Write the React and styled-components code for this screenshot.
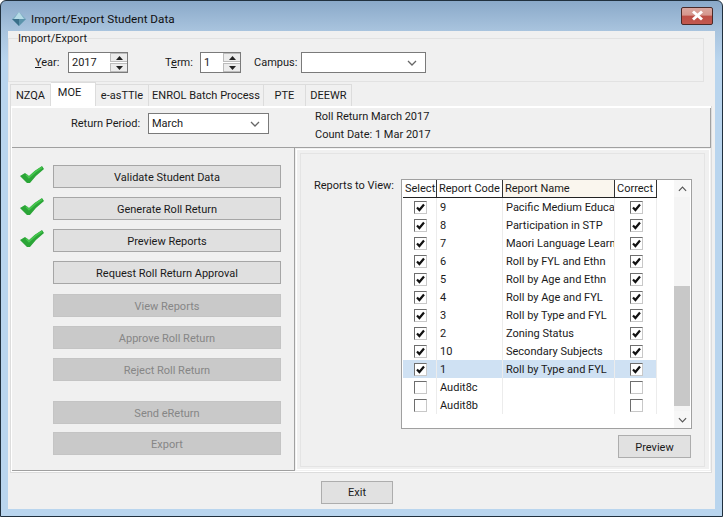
import React from "react";
import styled, { createGlobalStyle } from "styled-components";

const Global = createGlobalStyle`
  html, body { margin: 0; padding: 0; background: #fff; }
  * { box-sizing: border-box; }
  body { font-family: Roboto, "Liberation Sans", sans-serif; font-size: 11px; color: #1a1a1a; }
`;

const Frame = styled.div`
  width: 723px; height: 517px; display: flex; flex-direction: column;
  border: 1px solid #20303e; border-radius: 6px 6px 0 0; overflow: hidden;
  background: linear-gradient(180deg, #8aa9c9 0, #a9c4de 30px, #b9d5ee 60px, #b9d5ee 100%);
`;
const TitleBar = styled.div`
  height: 30px; flex: none; display: flex; align-items: center; padding: 5px 9px 0 11px; gap: 5px;
`;
const Title = styled.span` flex: 1; font-size: 11.7px; color: #101010; `;
const CloseBtn = styled.div`
  width: 32px; height: 18px; margin-top: -6px; display: flex; align-items: center; justify-content: center;
  border: 1px solid #4a2a28; border-radius: 2px;
  background: linear-gradient(180deg, #dba79f 0, #d5968d 45%, #bd4f46 50%, #c2584e 100%);
`;
const Client = styled.div`
  flex: 1; margin: 0 7px 7px 7px; background: #f0f0f0; display: flex; flex-direction: column; min-height: 0;
`;
const Group = styled.fieldset`
  margin: 0 11px 0 0; padding: 6px 0 8px 26px; height: 51px; flex: none;
  border: 1px solid #e2e2e2;
`;
const Legend = styled.legend`
  margin-left: -17px; padding: 1px 0 0; font-size: 11px; line-height: 14px;
`;
const FormRow = styled.div` display: flex; align-items: center; height: 21px; `;
const Label = styled.label`
  white-space: nowrap; margin-left: ${p => p.$ml || 0}px; width: ${p => p.$w}px; flex: none;
`;
const SpinBox = styled.div`
  width: ${p => p.$w}px; height: 21px; display: flex; flex: none; background: #fff;
  border: 1px solid #7a7a7a; padding: 0 0 0 3px; align-items: center; justify-content: space-between;
`;
const SpinBtns = styled.div` width: 17px; height: 19px; display: flex; flex-direction: column; gap: 1px; `;
const SpinBtn = styled.div`
  flex: 1; display: flex; align-items: center; justify-content: center;
  background: #ececec; border: 1px solid #bcbcbc; border-width: 1px 0 1px 1px;
`;
const Select = styled.div`
  width: ${p => p.$w}px; height: 21px; flex: none; display: flex; align-items: center; justify-content: space-between;
  background: #fff; border: 1px solid #7a7a7a; padding: 0 8px 0 3px;
`;
const TabStrip = styled.div` display: flex; height: 24px; flex: none; padding-left: 2px; align-items: flex-end; `;
const Tab = styled.div`
  width: ${p => p.$w}px; height: ${p => (p.$active ? 24 : 22)}px; flex: none; display: flex; align-items: center;
  justify-content: center; white-space: nowrap;
  background: ${p => (p.$active ? "#fff" : "#f0f0f0")};
  border: 1px solid #dcdcdc; border-bottom: none; border-left: ${p => (p.$first ? "1px solid #dcdcdc" : "none")};
  padding: 0 ${p => (p.$active ? 7 : 0)}px ${p => (p.$active ? 4 : 0)}px 0;
`;
const TabPanel = styled.div`
  height: 367px; margin: 0 3px 0 2px; flex: none; display: flex; flex-direction: column;
  border: 1px solid #dcdcdc; border-top: none; background: #fff; padding: 2px 0 1px 1px;
`;
const TopSection = styled.div`
  height: 40px; flex: none; background: #f0f0f0; display: flex; padding: 0 0 0 59px;
  border-right: 1px solid #a0a0a0; border-bottom: 1px solid #a0a0a0;
`;
const PeriodRow = styled.div` display: flex; align-items: center; height: 21px; margin-top: 5px; `;
const RollInfo = styled.div` display: flex; flex-direction: column; margin-left: 46px; line-height: 18px; `;
const Split = styled.div` flex: 1; display: flex; min-height: 0; background: #f0f0f0; `;
const LeftPanel = styled.div`
  width: 283px; flex: none; padding: 17px 0 0 8px; display: flex; flex-direction: column; gap: 9px;
  border-right: 1px solid #a0a0a0; border-bottom: 1px solid #a0a0a0; background: #f0f0f0;
`;
const ActionRow = styled.div` display: flex; align-items: flex-start; gap: 9px; padding-left: ${p => (p.$check ? 0 : 33)}px; margin-top: ${p => p.$mt || 0}px; `;
const ActionBtn = styled.div`
  width: 228px; height: 23px; flex: none; display: flex; align-items: center; justify-content: center; padding-top: 1px;
  background: ${p => (p.$disabled ? "#c9c9c9" : "#e0e0e0")};
  color: ${p => (p.$disabled ? "#868686" : "#1a1a1a")};
  border: 1px solid ${p => (p.$disabled ? "#c4c4c4" : "#a6a6a6")};
`;
const RightOuter = styled.div`
  flex: 1; margin: 1px 2px 1px 1px; padding: 3px 4px 2px 3px; background: #f0f0f0;
  border: 1px solid #fff; display: flex;
`;
const RightInner = styled.div`
  flex: 1; border: 1px solid #e4e4e4; padding: 25px 12px 0 13px; display: grid;
  grid-template-columns: 87px 1fr; grid-template-rows: 250px auto; row-gap: 6px; align-content: start;
`;
const ReportsLabel = styled.div` line-height: 14px; white-space: nowrap; `;
const ReportBox = styled.div`
  width: 291px; height: 250px; background: #fff; border: 1px solid #a0a0a0; display: flex; justify-content: space-between; padding: 0 1px;
`;
const Grid = styled.div` display: flex; flex-direction: column; width: 254px; `;
const Row = styled.div`
  display: grid; grid-template-columns: 34px 66px 112px 42px; height: 18px; flex: none;
  background: ${p => (p.$sel ? "#cfe1f3" : "transparent")};
  ${p => p.$head && "border-bottom: 1px solid #222;"}
`;
const HeadCell = styled.div`
  display: flex; align-items: center; padding: 0 0 1px 2px; white-space: nowrap; overflow: hidden;
  border-right: 1px solid #333; background: ${p => (p.$warm ? "#faf6ee" : "#fff")};
`;
const Cell = styled.div`
  display: flex; align-items: center; justify-content: ${p => (p.$center ? "center" : "flex-start")};
  padding-left: ${p => (p.$center ? 2 : 3)}px; white-space: nowrap; overflow: hidden; border-right: 1px solid #ececec;
`;
const Check = styled.div`
  width: 13px; height: 13px; border: 1px solid; border-color: #6e6e6e #c8c8c8 #c8c8c8 #6e6e6e; background: #fff;
  display: flex; align-items: center; justify-content: center;
`;
const ScrollBar = styled.div`
  width: 16px; display: flex; flex-direction: column; align-items: stretch; background: #f4f4f4;
`;
const ScrollEnd = styled.div` height: 17px; flex: none; display: flex; align-items: center; justify-content: center; background: #f7f7f7; `;
const ScrollTrack = styled.div` flex: 1; display: flex; flex-direction: column; padding: 89px 0 5px; `;
const Thumb = styled.div` flex: 1; background: #c8c8c8; `;
const PreviewBtn = styled.div`
  grid-column: 2; justify-self: end; width: 73px; height: 23px; margin-right: 1px; padding-top: 1px;
  display: flex; align-items: center; justify-content: center; background: #e1e1e1; border: 1px solid #adadad;
`;
const Footer = styled.div` flex: 1; padding: 8px 0 0 313px; `;
const ExitBtn = styled.div`
  width: 72px; height: 23px; display: flex; align-items: center; justify-content: center;
  background: #e1e1e1; border: 1px solid #adadad;
`;

const Chevron = ({ up, color = "#555", w = 10, h = 6 }) => (
  <svg width={w} height={h} viewBox="0 0 10 6">
    <polyline points={up ? "1,5 5,1 9,5" : "1,1 5,5 9,1"} fill="none" stroke={color} strokeWidth="1.3" />
  </svg>
);
const Tri = ({ up }) => (
  <svg width="7" height="4" viewBox="0 0 7 4"><polygon points={up ? "3.5,0 7,4 0,4" : "0,0 7,0 3.5,4"} fill="#222" /></svg>
);
const Spin = () => (
  <SpinBtns>
    <SpinBtn><Tri up /></SpinBtn>
    <SpinBtn><Tri /></SpinBtn>
  </SpinBtns>
);
const Tick = () => (
  <svg width="9" height="9" viewBox="0 0 9 9">
    <polyline points="1,4.5 3.4,7 8,1.5" fill="none" stroke="#111" strokeWidth="2.2" />
  </svg>
);
const GreenCheck = () => (
  <svg width="24" height="18" viewBox="0 0 24 18" style={{ flex: "none", marginTop: 1 }}>
    <path d="M0 10 L5 7 L9 10 Q15 4 22 0 L24 3 Q16 9 10 17 L7 17 Z" fill="#2ba537" />
    <path d="M6 8.5 L9 11.5 Q15 5 22 1.5" fill="none" stroke="#45c64e" strokeWidth="1.6" />
  </svg>
);
const AppIcon = () => (
  <svg width="14" height="14" viewBox="0 0 14 14">
    <polygon points="7,0 14,7 7,14 0,7" fill="#7fb0c4" />
    <polygon points="7,0 12,7 2,7" fill="#b5dbe6" />
    <polygon points="0,7 7,14 7,7" fill="#3a6f8a" />
    <polygon points="14,7 7,14 7,7" fill="#5c93ab" />
  </svg>
);

const ACTIONS = [
  { label: "Validate Student Data", check: true },
  { label: "Generate Roll Return", check: true },
  { label: "Preview Reports", check: true },
  { label: "Request Roll Return Approval" },
  { label: "View Reports", disabled: true, mt: 1 },
  { label: "Approve Roll Return", disabled: true },
  { label: "Reject Roll Return", disabled: true },
  { label: "Send eReturn", disabled: true, mt: 11 },
  { label: "Export", disabled: true, mt: -1 },
];
const REPORTS = [
  ["9", "Pacific Medium Educa", true],
  ["8", "Participation in STP", true],
  ["7", "Maori Language Learn", true],
  ["6", "Roll by FYL and Ethn", true],
  ["5", "Roll by Age and Ethn", true],
  ["4", "Roll by Age and FYL", true],
  ["3", "Roll by Type and FYL", true],
  ["2", "Zoning Status", true],
  ["10", "Secondary Subjects", true],
  ["1", "Roll by Type and FYL", true, true],
  ["Audit8c", "", false],
  ["Audit8b", "", false],
];
const TABS = [["NZQA", 41], ["MOE", 45], ["e-asTTle", 53], ["ENROL Batch Process", 115], ["PTE", 42], ["DEEWR", 46]];

export default function App() {
  return (
    <>
      <Global />
      <Frame>
        <TitleBar>
          <AppIcon />
          <Title>Import/Export Student Data</Title>
          <CloseBtn>
            <svg width="13" height="11" viewBox="0 0 13 11">
              <path d="M2 1.5 L11 9.5 M11 1.5 L2 9.5" stroke="#fff" strokeWidth="3" />
            </svg>
          </CloseBtn>
        </TitleBar>
        <Client>
          <Group>
            <Legend>Import/Export</Legend>
            <FormRow>
              <Label $w={33}><u>Y</u>ear:</Label>
              <SpinBox $w={60}><span>2017</span><Spin /></SpinBox>
              <Label $ml={37} $w={35}>T<u>e</u>rm:</Label>
              <SpinBox $w={41}><span>1</span><Spin /></SpinBox>
              <Label $ml={13} $w={47}>Campus:</Label>
              <Select $w={125}><span /><Chevron color="#666" /></Select>
            </FormRow>
          </Group>
          <TabStrip>
            {TABS.map(([t, w], i) => (
              <Tab key={t} $w={w} $first={i === 0} $active={t === "MOE"}>{t}</Tab>
            ))}
          </TabStrip>
          <TabPanel>
            <TopSection>
              <PeriodRow>
                <Label $w={77}>Return Period:</Label>
                <Select $w={121}><span>March</span><Chevron color="#666" /></Select>
              </PeriodRow>
              <RollInfo>
                <span>Roll Return March 2017</span>
                <span>Count Date: 1 Mar 2017</span>
              </RollInfo>
            </TopSection>
            <Split>
              <LeftPanel>
                {ACTIONS.map(a => (
                  <ActionRow key={a.label} $check={a.check} $mt={a.mt}>
                    {a.check && <GreenCheck />}
                    <ActionBtn $disabled={a.disabled}>{a.label}</ActionBtn>
                  </ActionRow>
                ))}
              </LeftPanel>
              <RightOuter>
                <RightInner>
                  <ReportsLabel>Reports to View:</ReportsLabel>
                  <ReportBox>
                    <Grid>
                      <Row $head>
                        <HeadCell>Select</HeadCell>
                        <HeadCell>Report Code</HeadCell>
                        <HeadCell $warm>Report Name</HeadCell>
                        <HeadCell>Correct</HeadCell>
                      </Row>
                      {REPORTS.map(([code, name, on, sel]) => (
                        <Row key={code} $sel={sel}>
                          <Cell $center><Check>{on && <Tick />}</Check></Cell>
                          <Cell>{code}</Cell>
                          <Cell>{name}</Cell>
                          <Cell $center><Check>{on && <Tick />}</Check></Cell>
                        </Row>
                      ))}
                    </Grid>
                    <ScrollBar>
                      <ScrollEnd><Chevron up color="#555" w={9} h={6} /></ScrollEnd>
                      <ScrollTrack><Thumb /></ScrollTrack>
                      <ScrollEnd><Chevron color="#555" w={9} h={6} /></ScrollEnd>
                    </ScrollBar>
                  </ReportBox>
                  <PreviewBtn>Preview</PreviewBtn>
                </RightInner>
              </RightOuter>
            </Split>
          </TabPanel>
          <Footer>
            <ExitBtn>Exit</ExitBtn>
          </Footer>
        </Client>
      </Frame>
    </>
  );
}
